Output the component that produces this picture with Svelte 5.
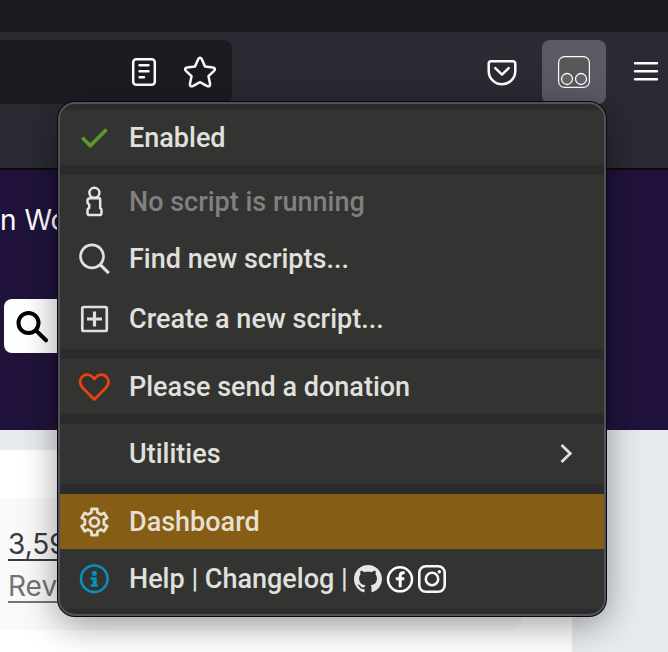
<script>
  const socials = ['GitHub', 'Facebook', 'Instagram'];
</script>

<div class="browser">
  <div class="tabs"></div>
  <header class="toolbar">
    <div class="urlbar">
      <button aria-label="Reader view">
        <svg width="32" height="32" viewBox="0 0 32 32" fill="none" stroke="#fbfbfe" stroke-linecap="round">
          <rect x="5.2" y="3.2" width="21.6" height="25.6" rx="3" stroke-width="2.5" />
          <path d="M11.5 9.3h9M11.5 15.2h9M11.5 21.3h4.500" stroke-width="2.4" />
        </svg>
      </button>
      <button aria-label="Bookmark this page">
        <svg width="32" height="32" viewBox="0 0 32 32" fill="none" stroke="#fbfbfe" stroke-width="2.5" stroke-linejoin="round">
          <path d="M14.200 3.200Q16 .2 17.800 3.200L21 10.500L28.900 11.400Q32.200 12.200 30.100 14.800L24.500 20.200L26 27.600Q26.400 31.200 23.200 30.100L16 26.200L8.800 30.100Q5.600 31.200 6 27.600L7.500 20.200L1.900 14.800Q-.2 12.200 3.100 11.400L11 10.500Z" />
        </svg>
      </button>
    </div>
    <div class="actions">
      <button aria-label="Save to Pocket">
        <svg width="32" height="32" viewBox="0 0 32 32" fill="none" stroke="#fbfbfe" stroke-width="2.500" stroke-linecap="round" stroke-linejoin="round">
          <path d="M5.200 5.200h21.600a2.500 2.500 0 0 1 2.500 2.500v7.300a13.300 13.300 0 0 1-26.600 0V7.700a2.500 2.500 0 0 1 2.500-2.500Z" />
          <path d="m9.300 12.200 6.700 6.500 6.700-6.500" />
        </svg>
      </button>
      <button class="active" aria-label="Script manager" aria-expanded="true">
        <svg width="32" height="32" viewBox="0 0 32 32" fill="#585859" stroke="#fbfbfe">
          <rect x=".6" y=".6" width="30.800" height="30.800" rx="6" stroke-width="1.2" />
          <g fill="#64646d" stroke-width="1.300"><circle cx="9" cy="23" r="5.500" /><circle cx="23" cy="23" r="5.500" /></g>
        </svg>
      </button>
      <button aria-label="Application menu">
        <svg width="32" height="32" viewBox="0 0 32 32" stroke="#fbfbfe" stroke-width="2.400" stroke-linecap="round">
          <path d="M5 7.200h22M5 15.300h22M5 23.300h22" />
        </svg>
      </button>
    </div>
  </header>

  <main>
    <section class="hero">
      <a class="workshop" href="#workshop">n Wo</a>
      <button class="search" aria-label="Search">
        <svg width="34" height="34" viewBox="0 0 34 34" fill="none" stroke="#000" stroke-width="4" stroke-linecap="round">
          <circle cx="12.500" cy="14" r="10" /><path d="m20 21.500 10 9.800" />
        </svg>
      </button>
    </section>
    <section class="content">
      <div class="card">
        <a class="count" href="#users">3,59</a>
        <a class="reviews" href="#reviews">Rev</a>
      </div>
    </section>
  </main>

  <nav class="menu" aria-label="Script menu">
    <div class="group">
      <button class="item">
        <svg width="32" height="32" viewBox="0 0 32 32" fill="none" stroke="#5f9826" stroke-width="3.600">
          <path d="m4.300 15.800 8 8L28.500 7.500" />
        </svg>
        <span>Enabled</span>
      </button>
    </div>
    <div class="group">
      <button class="item muted" disabled>
        <svg width="32" height="32" viewBox="0 0 32 32" fill="none" stroke="#e6e6e6" stroke-width="2.500" stroke-linejoin="round">
          <circle cx="16.400" cy="6.800" r="5" />
          <path d="M12.300 12.300h8.900q1 0 1 1v8.900q1.300.6 1.300 2v2.700q0 2.100-2.100 2.100h-9.800q-2.100 0-2.100-2.100v-2.700q0-1.700 1.700-2.200v-3.500q-1.700-.6-1.700-2.200v-1.500q0-2.500 2.800-2.500Z" />
        </svg>
        <span>No script is running</span>
      </button>
      <button class="item tall">
        <svg width="32" height="32" viewBox="0 0 32 32" fill="none" stroke="#e0e0de" stroke-width="2.600">
          <circle cx="14" cy="13.400" r="11.500" /><path d="m22.200 21.700 8.600 8.400" stroke-width="3.200" />
        </svg>
        <span>Find new scripts...</span>
      </button>
      <button class="item tall">
        <svg width="32" height="32" viewBox="0 0 32 32" fill="none" stroke="#e0e0de">
          <rect x="4.300" y="4" width="24.500" height="24" rx="1.500" stroke-width="2.700" /><path d="M16.500 8.500v15M9 16h15" stroke-width="3.200" />
        </svg>
        <span>Create a new script...</span>
      </button>
    </div>
    <div class="group">
      <button class="item">
        <svg width="32" height="32" viewBox="0 0 32 32" fill="none" stroke="#e8420f" stroke-width="2.800" stroke-linejoin="round">
          <path d="M16.300 28.500 4.400 16.500C1.400 13.500 1.200 8.500 4.200 5.700 7.200 2.900 11.600 3.200 14.200 5.800l2.100 2.100 2.100-2.100c2.600-2.600 7-2.900 10-.1s2.800 7.800-.2 10.800Z" />
        </svg>
        <span>Please send a donation</span>
      </button>
    </div>
    <div class="group">
      <button class="item tall">
        <span class="blank"></span>
        <span>Utilities</span>
        <svg class="chevron" width="32" height="32" viewBox="0 0 32 32" fill="none" stroke="#e0e0de" stroke-width="2.800">
          <path d="m11.500 7 8.800 8.500-8.800 8.500" />
        </svg>
      </button>
    </div>
    <div class="group">
      <button class="item selected">
        <svg width="32" height="32" viewBox="0 0 32 32" fill="none" stroke="#e6dfd0" stroke-width="2.800" stroke-linejoin="round">
          <path d="M13.500 3h5.800v3.500l3.600 2.100 3.200-1.700 3 5-3.200 1.900v4.500l3.200 1.900-3 5-3.200-1.700-3.600 2.100V29.200h-5.800v-3.600l-3.600-2.100-3.200 1.700-3-5 3.200-1.900v-4.500l-3.200-1.900 3-5 3.200 1.700 3.600-2.100Z" />
          <circle cx="16.400" cy="16.100" r="4.500" stroke-width="2.900" />
        </svg>
        <span>Dashboard</span>
      </button>
      <div class="item tall">
        <svg width="32" height="32" viewBox="0 0 32 32" fill="none" stroke="#0990b9" stroke-width="2.600">
          <circle cx="16.300" cy="15.800" r="13.300" />
          <circle cx="16.300" cy="10.300" r="2.600" fill="#0990b9" stroke="none" />
          <path d="M12.500 15.500h4.900v6.800M12.800 22.500h7" stroke-width="2.600" /><path d="M16.300 15v7.500" stroke-width="3.200" />
        </svg>
        <span class="help"><a href="#help">Help</a> | <a href="#changelog">Changelog</a> |</span>
        <span class="socials">
          {#each socials as name}
            <a href={'#' + name.toLowerCase()} aria-label={name}>
              {#if name === 'GitHub'}
                <svg width="28" height="28" viewBox="0 0 16 16" fill="#e6e6e6">
                  <path d="M8 0C3.580 0 0 3.580 0 8c0 3.540 2.290 6.530 5.470 7.590.4.070.55-.17.55-.38 0-.19-.01-.82-.01-1.490-2.010.37-2.530-.49-2.690-.94-.09-.23-.48-.94-.82-1.130-.28-.15-.68-.52-.01-.53.63-.01 1.080.58 1.230.82.72 1.210 1.870.87 2.330.66.07-.52.28-.87.51-1.070-1.780-.2-3.640-.89-3.640-3.950 0-.87.31-1.590.82-2.150-.08-.2-.36-1.020.08-2.120 0 0 .67-.21 2.200.82.64-.18 1.320-.27 2-.27s1.360.09 2 .27c1.530-1.040 2.200-.82 2.200-.82.44 1.100.16 1.920.08 2.120.51.56.82 1.270.82 2.150 0 3.070-1.870 3.750-3.650 3.950.29.25.54.73.54 1.480 0 1.070-.01 1.930-.01 2.200 0 .21.15.46.55.38A8.010 8.010 0 0 0 16 8c0-4.420-3.580-8-8-8Z" />
                </svg>
              {:else if name === 'Facebook'}
                <svg width="28" height="28" viewBox="0 0 28 28" fill="none" stroke="#fff">
                  <circle cx="14" cy="14.300" r="12" stroke-width="2.500" />
                  <path d="M18.700 7.800h-1.500q-3 0-3 3v11.500M9.800 13.800h8.500" stroke-width="3" />
                </svg>
              {:else}
                <svg width="28" height="28" viewBox="0 0 28 28" fill="none" stroke="#f7f7f7" stroke-width="2.600">
                  <rect x="1.300" y="1.300" width="25.400" height="25.400" rx="6.500" /><circle cx="14" cy="14" r="6.200" /><circle cx="21.300" cy="6.700" r="1.700" fill="#f7f7f7" stroke="none" />
                </svg>
              {/if}
            </a>
          {/each}
        </span>
      </div>
    </div>
  </nav>
</div>

<style>
  :global(body) { margin: 0; background: #e7eaee; }
  .browser { position: relative; min-height: 100vh; overflow: hidden; font-family: Inter, "Liberation Sans", sans-serif; font-size: 28px; line-height: 32px; }
  button { appearance: none; border: 0; margin: 0; padding: 0; background: none; font: inherit; color: inherit; text-align: left; }
  a { color: inherit; text-decoration: none; }
  svg { display: block; flex: none; }
  .tabs { height: 32px; background: #1c1b22; }
  .toolbar { display: flex; align-items: flex-start; height: 128px; padding-top: 8px; background: #2b2a33; border-bottom: 2px solid #0c0c0d; }
  .urlbar { flex: 1; display: flex; justify-content: flex-end; align-items: center; gap: 24px; height: 64px; padding-right: 16px; box-sizing: border-box; background: #1c1b22; border-radius: 0 8px 8px 0; }
  .actions { display: flex; align-items: center; gap: 24px; margin-left: 254px; padding-right: 6px; }
  .active { display: flex; align-items: center; justify-content: center; width: 64px; height: 64px; border-radius: 8px; background: #5b5b66; }
  .hero { display: flex; flex-direction: column; align-items: flex-start; gap: 63px; height: 226px; padding-top: 34px; background: #20123a; color: #fff; }
  .search { display: flex; align-items: center; width: 300px; height: 54px; margin-left: 4px; padding-left: 12px; box-sizing: border-box; border-radius: 8px; background: #fff; }
  .content { margin: 20px 96px 0 0; padding: 48px 48px 22px 0; background: #fff; }
  .card { display: flex; flex-direction: column; align-items: flex-start; gap: 10px; padding: 30px 0 28px 8px; border-radius: 0 16px 16px 0; background: #f9f9fa; }
  .card a { text-decoration: underline; text-decoration-thickness: 2px; text-underline-offset: 5px; }
  .count { color: #363b40; }
  .reviews { color: #737373; }
  .menu { position: absolute; top: 102px; left: 58px; right: 62px; display: flex; flex-direction: column; gap: 10px; padding: 6px 0 5px; border: 2px solid #52525e; border-radius: 17px; background: #2b2b2b; color: #e0e0de; box-shadow: 0 0 0 1px #08080a, 0 8px 36px #0006; overflow: hidden; font-family: Roboto, "Liberation Sans", sans-serif; font-size: 27px; font-weight: 500; }
  .group { display: flex; flex-direction: column; background: #333331; }
  .item { display: flex; align-items: center; gap: 19px; width: 100%; height: 55px; padding: 0 22px 0 18px; box-sizing: border-box; }
  .tall { height: 60px; }
  .muted { height: 54px; color: #808080; }
  .selected { background: #855d15; color: #e6dfd0; }
  .blank { width: 32px; }
  .chevron { margin-left: auto; }
  .socials { display: flex; gap: 4px; margin-left: -13px; }
</style>
